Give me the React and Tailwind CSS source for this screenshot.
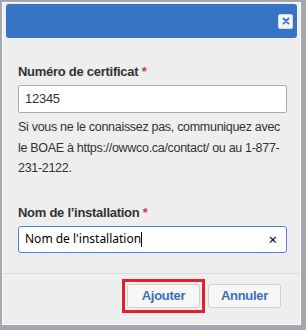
import React from 'react';

export default function App() {
  return (
    <div className="w-[306px] h-[330px] bg-[#a3a8ae] overflow-hidden font-['Liberation_Sans',Arial,sans-serif] text-[#333] tracking-[-0.27px]">
      <div className="ml-[2px] mt-[2px] w-[299px] h-[323px] bg-[#eeeeee] border border-[#fafafa] pt-px px-[3px] flex flex-col">
        {/* Header */}
        <div className="shrink-0 h-[34px] bg-[#3874c4] rounded-[3px] flex items-center justify-end pr-[4px]">
          <button className="w-[15px] h-[15px] bg-[#f4f6f9] border border-[#d5dbe4] rounded-[2px] flex items-center justify-center">
            <svg width="8" height="8" viewBox="0 0 8 8">
              <path d="M1.5 1.5 L6.5 6.5 M6.5 1.5 L1.5 6.5" stroke="#3f7ad0" strokeWidth="2" strokeLinecap="round" />
            </svg>
          </button>
        </div>

        <div className="pl-[12px] pr-[10px] pt-[26px] flex flex-col">
          <label className="text-[13px] font-bold leading-[16px]">
            Numéro de certificat <span className="text-[#d23a3a]">*</span>
          </label>
          <div className="mt-[5px] h-[28px] bg-white border border-[#aaaaaa] rounded-[2px] flex items-center px-[6px] text-[13px]">
            12345
          </div>
          <p className="mt-[4px] text-[12.5px] tracking-[-0.3px] leading-[20.5px]">
            Si vous ne le connaissez pas, communiquez avec le BOAE à https://owwco.ca/contact/ ou au 1-877-231-2122.
          </p>
          <label className="mt-[26px] text-[13px] font-bold leading-[16px]">
            Nom de l’installation <span className="text-[#d23a3a]">*</span>
          </label>
          <div className="mt-[5px] h-[27px] bg-white border border-[#4a86d8] rounded-[3px] flex items-center pl-[6px] pr-[9px] text-[12px] tracking-normal font-['Noto_Sans',sans-serif] text-black">
            <span>Nom de l'installation</span>
            <span className="w-px h-[15px] bg-black" />
            <span className="ml-auto text-[15px] leading-none">×</span>
          </div>
        </div>

        <div className="mt-[20px] -mx-[3px] border-t border-[#dcdcdc] flex justify-end gap-[3px] pt-[5px] pr-[19px]">
          <div className="border-[3px] border-[#e0202a] p-[2px]">
            <button className="w-[73px] h-[24px] bg-[#f7f7f7] border border-[#cfcfcf] rounded-[3px] text-[#3a6fb8] font-bold text-[13px] flex items-center justify-center">
              Ajouter
            </button>
          </div>
          <div className="pt-[5px]">
            <button className="w-[73px] h-[24px] bg-[#f7f7f7] border border-[#cfcfcf] rounded-[3px] text-[#3a6fb8] font-bold text-[13px] flex items-center justify-center">
              Annuler
            </button>
          </div>
        </div>
      </div>
    </div>
  );
}
